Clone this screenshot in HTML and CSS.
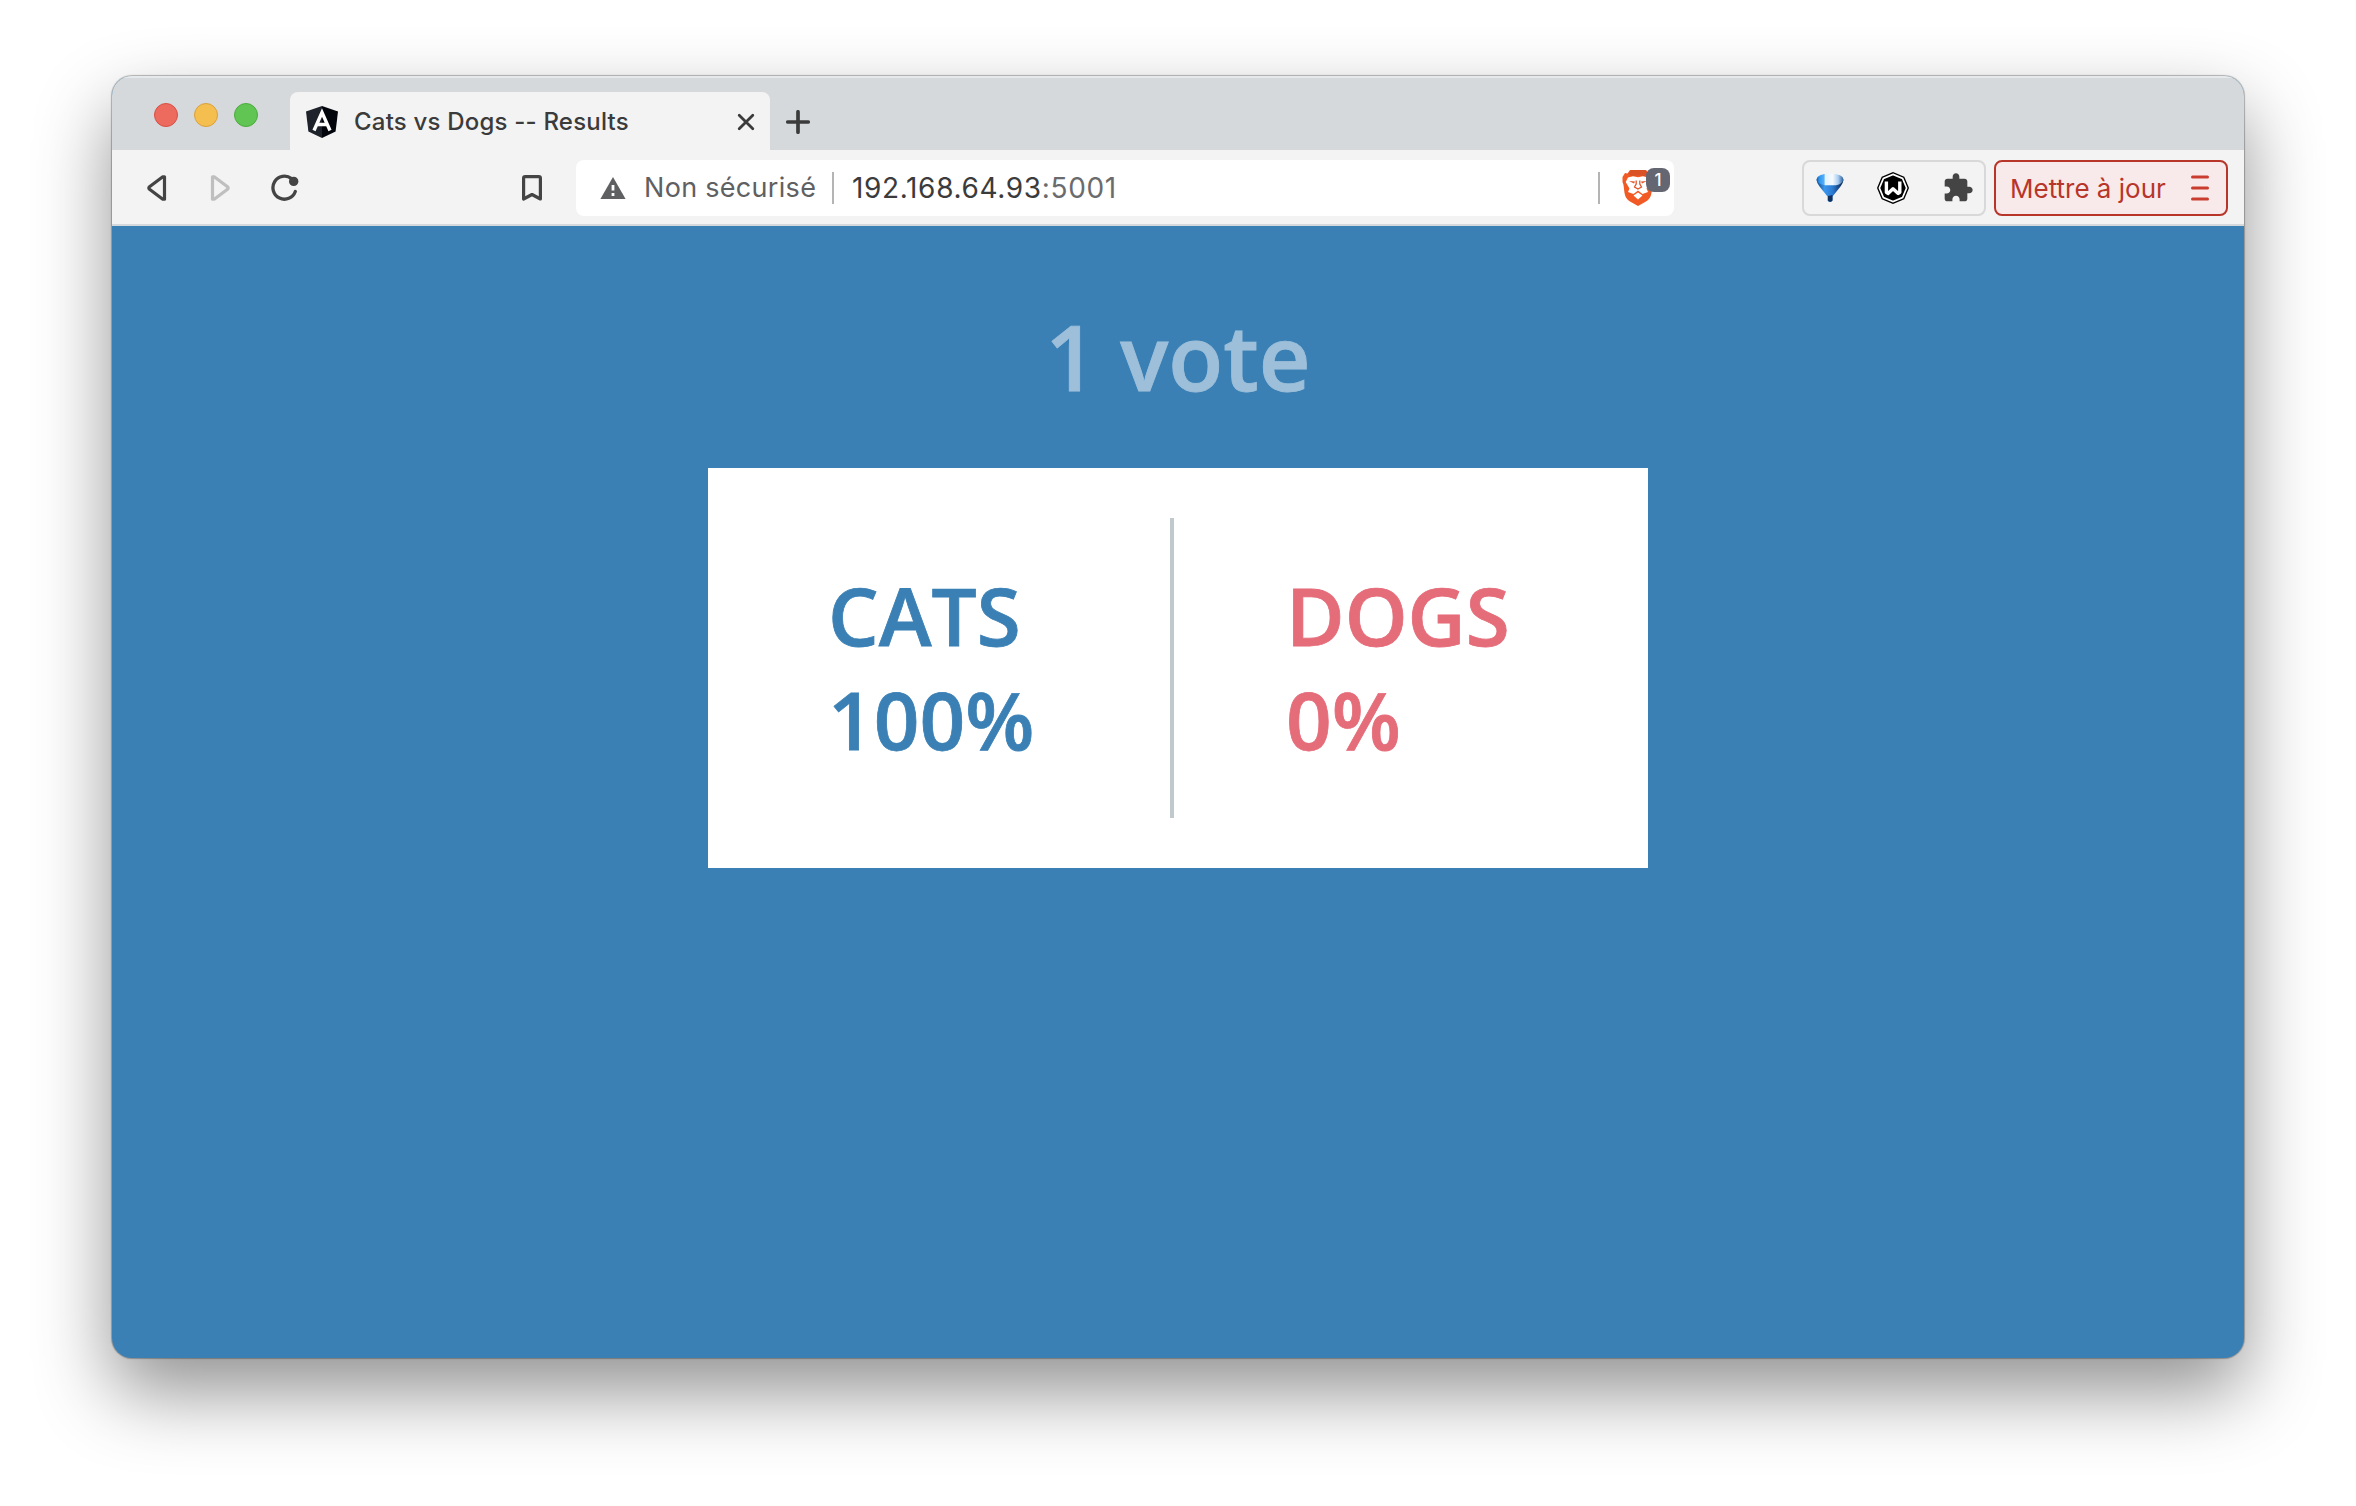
FILE: index.html
```html
<!DOCTYPE html>
<html lang="fr">
<head>
<meta charset="utf-8">
<title>Cats vs Dogs -- Results</title>
<link rel="stylesheet" href="styles.css">
</head>
<body>
<div class="window">
  <header class="tabstrip">
    <div class="lights"><span class="light red"></span><span class="light yellow"></span><span class="light green"></span></div>
    <div class="tab">
      <svg class="favicon" width="32" height="32" viewBox="0 0 32 32"><path d="M16 0 0 5.500 2.400 25.500 16 32Z" fill="#1d222b"/><path d="M16 0 32 5.500 29.600 25.500 16 32Z" fill="#02050c"/><path d="M8 24.500 16 6.500 24 24.500M11.500 18.500H20.500" fill="none" stroke="#fff" stroke-width="3.400"/></svg>
      <span class="title">Cats vs Dogs -- Results</span>
      <svg class="close" width="18" height="18" viewBox="0 0 18 18"><path d="M2.200 2.200 15.800 15.800M15.800 2.200 2.200 15.800" stroke="#3b3b3b" stroke-width="2.800" stroke-linecap="round"/></svg>
    </div>
    <svg class="plus" width="24" height="24" viewBox="0 0 24 24"><path d="M12 1.800V22.200M1.800 12H22.200" stroke="#3b3b3b" stroke-width="3.700" stroke-linecap="round"/></svg>
  </header>
  <nav class="toolbar">
    <svg class="back" width="20" height="28" viewBox="0 0 20 28"><path d="M17.500 2.800V25.200L15.800 25.200 2.500 15.300Q1.100 14 2.500 12.700L15.800 2.800Z" fill="none" stroke="#444" stroke-width="3.200" stroke-linejoin="round"/></svg>
    <svg class="forward" width="20" height="28" viewBox="0 0 20 28"><path d="M2.500 2.800V25.200L4.200 25.200 17.500 15.300Q18.900 14 17.500 12.700L4.200 2.800Z" fill="none" stroke="#bfbfbf" stroke-width="3.200" stroke-linejoin="round"/></svg>
    <svg class="reload" width="28" height="28" viewBox="0 0 28 28"><path d="M20.500 4.600A11.500 11.500 0 1 0 24.300 17.500" fill="none" stroke="#444" stroke-width="3.300" stroke-linecap="round"/><circle cx="22.700" cy="7.400" r="4.700" fill="#444"/></svg>
    <svg class="bookmark" width="20" height="28" viewBox="0 0 20 28"><path d="M1.600 25V4.200Q1.600 2.600 3.200 2.600H16.800Q18.400 2.600 18.400 4.200V25L10 20.500Z" fill="none" stroke="#444" stroke-width="3.200" stroke-linejoin="round"/></svg>
    <div class="address">
      <svg class="warning" width="26" height="24" viewBox="0 0 26 24"><path d="M13 1 25.600 23H.4Z" fill="#5f6062"/><path d="M11.600 9H14.400V14.500H11.600ZM11.600 17H14.400V20H11.600Z" fill="#fff"/></svg>
      <span class="security">Non sécurisé</span>
      <span class="rule"></span>
      <span class="url">192.168.64.93<span class="port">:5001</span></span>
      <span class="rule end"></span>
      <div class="shield">
        <svg width="32" height="36" viewBox="0 0 32 36"><path d="M8 0H24L27 3.500 29.500 3 31.500 7 30.500 12 29.500 23Q28.500 29 24 31.500L16 36 8 31.500Q3.500 29 2.500 23L1.500 15 .5 12 .5 7 3 3 5.500 3.500Z" fill="#f15a24"/><path d="M9 0H23L26 4 23 6 16 5.500 9 6 6 4Z" fill="#d95326"/><path d="M6 7.500 11 6.300 16 7.200 21 6.300 26 7.500 28.300 12 24.500 18.500 26 22 20.500 24 16 20.500 11.500 24 6 22 7.500 18.500 3.700 12ZM16 22.500 20.500 25.500 16 29.500 11.500 25.500Z" fill="#fff"/><path d="M7 11 13 11.500 12 13.500ZM25 11 19 11.500 20 13.500Z" fill="#e0552a"/><path d="M14.200 10.500V14L12.500 17 16 19 19.500 17 17.800 14V10.500" fill="none" stroke="#e0552a" stroke-width="1.300"/></svg>
        <span class="badge">1</span>
      </div>
    </div>
    <div class="extensions">
      <svg width="28" height="32" viewBox="0 0 28 32"><defs><linearGradient id="cone" x1="0" x2="1"><stop offset="0" stop-color="#174784"/><stop offset=".3" stop-color="#3b97ec"/><stop offset=".6" stop-color="#2b7ad2"/><stop offset="1" stop-color="#0a2145"/></linearGradient><linearGradient id="mouth" x1="0" x2="1"><stop offset="0" stop-color="#174f8e"/><stop offset=".1" stop-color="#2d94ee"/><stop offset=".28" stop-color="#55b0fa"/><stop offset=".32" stop-color="#e4f3ff"/><stop offset=".6" stop-color="#f4faff"/><stop offset=".8" stop-color="#a9cdf0"/><stop offset="1" stop-color="#245a98"/></linearGradient></defs><path d="M.5 8Q.8 11 3.500 14.500L11.500 24.500V28.500Q14 31.500 16.500 28.500V24.500L24.500 14.500Q27.200 11 27.500 8Z" fill="url(#cone)"/><path d="M12 24V28.500Q14 31 16.500 28.500V23" fill="#12305c"/><path d="M.5 7.500Q1 1.700 14 1.700T27.500 7.500Q26.500 12 20 13.300L9 13.300Q1.500 12 .5 7.500Z" fill="url(#mouth)"/></svg>
      <svg width="32" height="32" viewBox="0 0 32 32"><path d="M16 0 27.300 4.700 32 16 27.300 27.300 16 32 4.700 27.300 0 16 4.700 4.700Z"/><path d="M16 2.400 25.600 6.400 29.600 16 25.600 25.600 16 29.600 6.400 25.600 2.400 16 6.400 6.400Z" fill="none" stroke="#fff" stroke-width="1.700"/><path d="M9.400 9.500V20.300L11 21.500 16 16.800 21.200 21.500 22.800 20.300V9.500" fill="none" stroke="#fff" stroke-width="3.400" stroke-linejoin="round"/></svg>
      <svg width="32" height="32" viewBox="0 0 24 24"><path d="M20.500 11H19V7c0-1.100-.9-2-2-2h-4V3.500C13 2.120 11.880 1 10.500 1S8 2.120 8 3.500V5H4c-1.100 0-1.990.9-1.990 2v3.800H3.500c1.490 0 2.700 1.210 2.700 2.700s-1.210 2.700-2.700 2.700H2V20c0 1.100.9 2 2 2h3.800v-1.500c0-1.490 1.210-2.700 2.700-2.700 1.490 0 2.700 1.210 2.700 2.700V22H17c1.100 0 2-.9 2-2v-4h1.500c1.380 0 2.500-1.120 2.500-2.500S21.880 11 20.500 11z" fill="#444"/></svg>
    </div>
    <div class="update"><span>Mettre à jour</span><svg width="18" height="26" viewBox="0 0 18 26"><path d="M1.500 2H16.500M1.500 13H16.500M1.500 24H16.500" stroke="#c93c2e" stroke-width="3" stroke-linecap="round"/></svg></div>
  </nav>
  <main class="page">
    <div class="total">1 vote</div>
    <section class="card">
      <div class="choice cats"><div>CATS</div><div>100%</div></div>
      <div class="divider"></div>
      <div class="choice dogs"><div>DOGS</div><div>0%</div></div>
    </section>
  </main>
</div>
</body>
</html>
```
FILE: styles.css
```css
* { box-sizing: border-box; }
body {
  margin: 0;
  padding: 76px 112px 148px;
  height: 1506px;
  background: #fff;
  font-family: Inter, "Liberation Sans", sans-serif;
  overflow: hidden;
}
svg { display: block; flex: none; }
.window {
  height: 1282px;
  border-radius: 20px;
  overflow: hidden;
  background: #3b80b5;
  box-shadow: 0 0 1px 1px rgba(0, 0, 0, .27), 0 34px 76px rgba(0, 0, 0, .43);
}
.tabstrip {
  height: 74px;
  padding: 16px 0 0 42px;
  display: flex;
  background: #d5d9dc;
  box-shadow: inset 0 2px 0 #e6e9eb;
}
.lights { display: flex; gap: 16px; width: 136px; padding-top: 11px; }
.light { width: 24px; height: 24px; border-radius: 50%; border: 1px solid; }
.red { background: #ed6a5e; border-color: #d65045; }
.yellow { background: #f5bf4f; border-color: #d9a03c; }
.green { background: #61c554; border-color: #4cab3d; }
.tab {
  width: 480px;
  height: 58px;
  padding: 0 15px 0 16px;
  display: flex;
  align-items: center;
  border-radius: 8px 8px 0 0;
  background: #f3f3f3;
}
.favicon { margin-top: 2px; }
.title {
  flex: 1;
  margin: 2px 0 0 16px;
  font-size: 24px;
  font-weight: 500;
  line-height: 30px;
  letter-spacing: .2px;
  white-space: nowrap;
  color: #3b3b3b;
}
.close { margin-top: 2px; }
.plus { margin: 18px 0 0 16px; }
.toolbar {
  height: 76px;
  padding: 2px 16px 0 35px;
  display: flex;
  align-items: center;
  border-bottom: 2px solid #d5d9dc;
  background: #f3f3f3;
}
.forward { margin-left: 43px; }
.reload { margin-left: 41px; }
.bookmark { margin-left: 223px; }
.address {
  width: 1098px;
  height: 56px;
  margin-left: 34px;
  padding: 0 4px 0 24px;
  display: flex;
  align-items: center;
  border-radius: 8px;
  background: #fff;
  font-size: 27px;
  line-height: 36px;
  white-space: nowrap;
}
.security { width: 187px; margin-left: 18px; color: #5f6062; letter-spacing: .3px; }
.rule { width: 2px; height: 32px; margin-left: 1px; background: #b4b4b4; }
.url { margin-left: 18px; color: #3b3b3b; font-size: 28px; letter-spacing: .65px; }
.port { color: #6a6b6d; }
.rule.end { margin-left: auto; }
.shield { position: relative; width: 48px; margin-left: 22px; }
.badge {
  position: absolute;
  top: -2px;
  right: 0;
  width: 24px;
  height: 24px;
  border-radius: 8px;
  background: #646672;
  color: #fff;
  font-size: 17px;
  font-weight: 500;
  line-height: 24px;
  text-align: center;
}
.extensions {
  width: 184px;
  height: 56px;
  margin-left: 128px;
  padding: 0 10px 0 12px;
  display: flex;
  align-items: center;
  justify-content: space-between;
  border: 2px solid #d8d8d8;
  border-radius: 8px;
}
.update {
  width: 234px;
  height: 56px;
  margin-left: 8px;
  padding: 0 17px 0 14px;
  display: flex;
  align-items: center;
  justify-content: space-between;
  border: 2px solid #b8352a;
  border-radius: 8px;
  background: #f8eaea;
  color: #b8352a;
  font-size: 26px;
  white-space: nowrap;
}
.page {
  display: flex;
  flex-direction: column;
  align-items: center;
  font-family: "Open Sans", sans-serif;
  font-weight: 600;
}
.total {
  height: 242px;
  padding-top: 70px;
  font-size: 90px;
  line-height: 120px;
  color: #fff;
  opacity: .5;
  -webkit-text-stroke: .8px #fff;
}
.card {
  width: 940px;
  height: 400px;
  padding-left: 120px;
  display: flex;
  align-items: center;
  background: #fff;
  font-size: 80px;
  line-height: 104px;
  -webkit-text-stroke: .8px currentColor;
}
.choice { padding-bottom: 3px; }
.cats { width: 342px; color: #3b80b5; }
.divider { width: 4px; height: 300px; background: #c0c9cc; }
.dogs { margin-left: 112px; color: #e56c79; }
```
